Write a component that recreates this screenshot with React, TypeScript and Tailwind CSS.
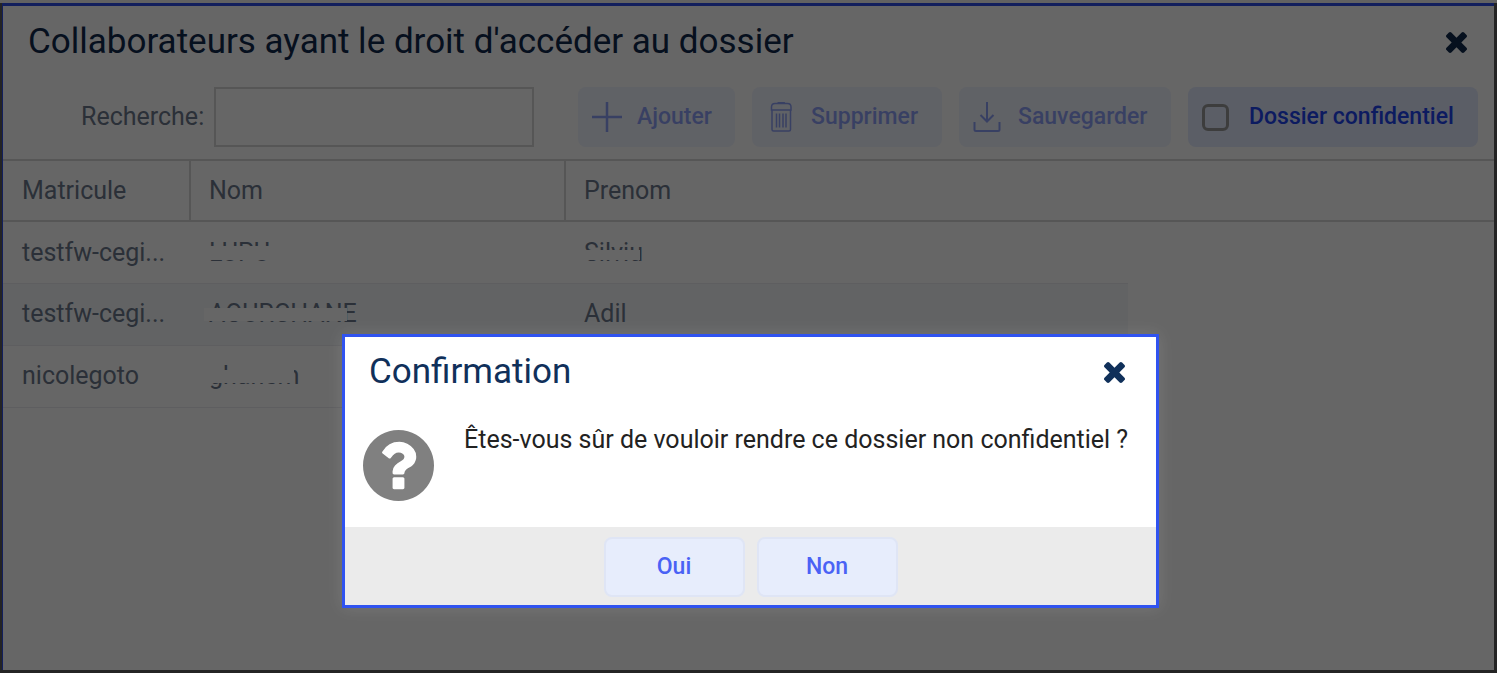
import { useState } from "react";

interface Collaborator {
  matricule: string;
  nom: string;
  prenom: string;
  nomMask?: string;
  prenomMask?: string;
}

const collaborators: Collaborator[] = [
  {
    matricule: "testfw-cegi...",
    nom: "LUPU",
    prenom: "Silviu",
    nomMask: "top-6 h-[14px] left-[14px] w-20 bg-white",
    prenomMask: "top-7 h-[10px] left-[14px] w-[61px] bg-white",
  },
  {
    matricule: "testfw-cegi...",
    nom: "AOURCHANE",
    prenom: "Adil",
    nomMask: "top-6 h-[13px] left-[14px] w-[143px] bg-white",
  },
  {
    matricule: "nicolegoto",
    nom: "ghanem",
    prenom: "",
    nomMask: "top-6 h-[13px] left-[14px] w-[90px] bg-white",
  },
];

function CloseIcon() {
  return (
    <svg viewBox="302 366 1188 1188" className="size-[21px]" fill="currentColor" aria-hidden="true">
      <path d="M1490 1322q0 40-28 68l-136 136q-28 28-68 28t-68-28l-294-294-294 294q-28 28-68 28t-68-28l-136-136q-28-28-28-68t28-68l294-294-294-294q-28-28-28-68t28-68l136-136q28-28 68-28t68 28l294 294 294-294q28-28 68-28t68 28l136 136q28 28 28 68t-28 68l-294 294 294 294q28 28 28 68z" />
    </svg>
  );
}

function QuestionIcon() {
  return (
    <svg viewBox="128 128 1536 1536" className="size-[71px] shrink-0" fill="#808080" aria-hidden="true">
      <path d="M1024 1376v-192q0-14-9-23t-23-9h-192q-14 0-23 9t-9 23v192q0 14 9 23t23 9h192q14 0 23-9t9-23zm256-672q0-88-55.5-163t-138.5-116-170-41q-243 0-371 213-15 24 8 42l132 100q7 6 19 6 16 0 25-12 53-68 86-92 34-24 86-24 48 0 85.5 26t37.5 59q0 38-20 61t-68 45q-63 28-115.5 86.5t-52.5 125.500v36q0 14 9 23t23 9h192q14 0 23-9t9-23q0-19 21.5-49.5t54.5-49.500q32-18 49-28.500t46-35 44.500-48 28-60.500 12.500-81zm384 192q0 209-103 385.500t-279.500 279.500-385.500 103-385.500-103-279.500-279.500-103-385.500 103-385.500 279.500-279.500 385.500-103 385.500 103 279.500 279.500 103 385.500z" />
    </svg>
  );
}

function PlusIcon() {
  return (
    <svg viewBox="0 0 30 30" className="size-[30px]" fill="none" stroke="currentColor" strokeWidth="2.500" aria-hidden="true">
      <path d="M15 0v30M0 15h30" />
    </svg>
  );
}

function TrashIcon() {
  return (
    <svg viewBox="0 0 30 30" className="size-[30px]" fill="none" stroke="currentColor" strokeWidth="1.500" aria-hidden="true">
      <path d="M12 1.500q0-1 1-1h4.500q1 0 1 1" />
      <path d="M5.500 8V5q0-3.500 3.500-3.500h12.500q3.500 0 3.500 3.500v3z" />
      <path d="M6 8v19.500q0 1.500 1.500 1.500h15.500q1.500 0 1.500-1.500V8" />
      <path d="M10.500 11.500v14M13.500 11.500v14M17 11.500v14M20 11.500v14" />
    </svg>
  );
}

function DownloadIcon() {
  return (
    <svg viewBox="0 0 30 30" className="size-[30px]" fill="none" stroke="currentColor" strokeWidth="2" aria-hidden="true">
      <path d="M14 0v18M7.500 13l6.500 6.500 6.500-6.500" />
      <path d="M1.500 20v7.500q0 1.500 1.500 1.500h22q1.500 0 1.500-1.500V20" />
    </svg>
  );
}

const toolbarButton =
  "flex h-[60px] items-center gap-[15px] rounded-lg bg-[#e3eaff] px-[14px] text-[23px] font-medium text-[#1e44f0] disabled:opacity-50";

function NameCell({ value, mask }: { value: string; mask?: string }) {
  return (
    <td className="relative px-[19px]">
      {value}
      {mask && <span className={`absolute ${mask}`} />}
    </td>
  );
}

export default function App() {
  const [search, setSearch] = useState("");
  const [confidential, setConfidential] = useState(false);
  const [confirmOpen, setConfirmOpen] = useState(true);

  return (
    <div className="relative flex min-h-screen flex-col bg-[#5a5a5a] font-['Roboto',sans-serif] text-[#6b788c]">
      <div className="h-[3px] bg-[#f4f4f4]" />

      <main className="mr-[3px] mb-[3px] ml-[2px] flex grow flex-col border-t-3 border-l border-[#2f4fe8] bg-white">
        <header className="flex h-[72px] items-center justify-between pr-[27px] pl-[25px] text-[#10294d]">
          <h1 className="text-[35px]">Collaborateurs ayant le droit d'accéder au dossier</h1>
          <button aria-label="Fermer">
            <CloseIcon />
          </button>
        </header>

        <div className="flex items-center border-b-2 border-[#d8d8d8] pt-[9px] pr-4 pb-3 pl-[78px]">
          <label htmlFor="search" className="mr-[10px] text-[25px]">
            Recherche:
          </label>
          <input
            id="search"
            value={search}
            onChange={(e) => setSearch(e.target.value)}
            className="h-[60px] w-80 border-2 border-[#d8d8d8] bg-white px-3 text-[23px] outline-none"
          />
          <div className="ml-auto flex gap-[17px]">
            <button disabled className={`${toolbarButton} w-[157px]`}>
              <PlusIcon />
              Ajouter
            </button>
            <button disabled className={`${toolbarButton} w-[190px]`}>
              <TrashIcon />
              Supprimer
            </button>
            <button disabled className={`${toolbarButton} w-[212px]`}>
              <DownloadIcon />
              Sauvegarder
            </button>
            <label className="flex h-[60px] w-[290px] items-center gap-5 rounded-lg bg-[#e3eaff] px-[14px] text-[23px] font-medium text-[#1e44f0]">
              <input
                type="checkbox"
                checked={confidential}
                onChange={(e) => setConfidential(e.target.checked)}
                className="size-[27px] shrink-0 appearance-none rounded-md border-3 border-[#9a9a9a] checked:bg-[#1e44f0]"
              />
              Dossier confidentiel
            </label>
          </div>
        </div>

        <table className="w-full table-fixed border-collapse text-left text-[25px]">
          <colgroup>
            <col className="w-[187px]" />
            <col className="w-[375px]" />
            <col className="w-[563px]" />
            <col />
          </colgroup>
          <thead>
            <tr className="h-[60px] border-b-2 border-[#d8d8d8]">
              <th className="border-r-2 border-[#d8d8d8] px-[19px] font-normal">Matricule</th>
              <th className="border-r-2 border-[#d8d8d8] px-[18px] font-normal">Nom</th>
              <th className="px-[18px] font-normal">Prenom</th>
              <td />
            </tr>
          </thead>
          <tbody>
            {collaborators.map((c, i) => (
              <tr
                key={i}
                className="h-[62px] [&>td:not(:last-child)]:border-b [&>td:not(:last-child)]:border-[#ececf0] even:[&>td:not(:last-child)]:bg-[#f5f8fb]"
              >
                <td className="px-[19px] whitespace-nowrap">{c.matricule}</td>
                <NameCell value={c.nom} mask={c.nomMask} />
                <NameCell value={c.prenom} mask={c.prenomMask} />
                <td />
              </tr>
            ))}
          </tbody>
        </table>
      </main>

      {confirmOpen && (
        <div className="absolute inset-0 flex items-start justify-center bg-black/60 pt-[334px] pl-1">
          <div
            role="dialog"
            aria-labelledby="confirm-title"
            className="w-[817px] border-3 border-[#3053f0] bg-white shadow-[0_0_16px_rgba(255,255,255,0.12)]"
          >
            <div className="flex h-[70px] items-center justify-between pr-[31px] pl-6 text-[#10305a]">
              <h2 id="confirm-title" className="text-[35px]">
                Confirmation
              </h2>
              <button aria-label="Fermer" onClick={() => setConfirmOpen(false)}>
                <CloseIcon />
              </button>
            </div>
            <div className="flex items-end gap-[30px] px-[18px] pt-[23px] pb-[26px]">
              <QuestionIcon />
              <p className="self-start text-[25px] leading-5 whitespace-nowrap text-[#222222]">
                Êtes-vous sûr de vouloir rendre ce dossier non confidentiel ?
              </p>
            </div>
            <div className="flex justify-center gap-3 bg-[#ebebeb] pt-[10px] pb-2 text-[23px] font-medium text-[#4a62f5]">
              <button
                onClick={() => setConfirmOpen(false)}
                className="h-[60px] w-[141px] rounded-lg border-2 border-[#dfe5f5] bg-[#e7edfc]"
              >
                Oui
              </button>
              <button
                onClick={() => setConfirmOpen(false)}
                className="h-[60px] w-[141px] rounded-lg border-2 border-[#dfe5f5] bg-[#e7edfc]"
              >
                Non
              </button>
            </div>
          </div>
        </div>
      )}
    </div>
  );
}
